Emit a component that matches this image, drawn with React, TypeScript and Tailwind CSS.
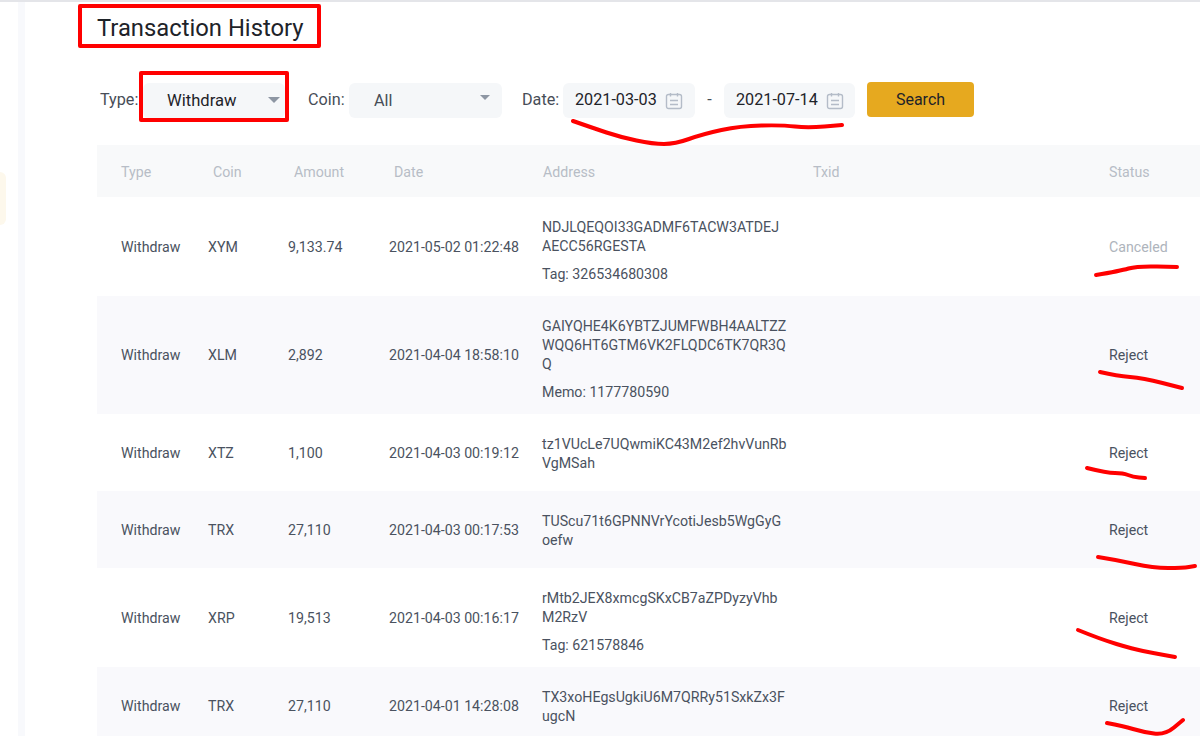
const rows = [
  { coin: 'XYM', amount: '9,133.74', date: '2021-05-02 01:22:48', lines: ['NDJLQEQOI33GADMF6TACW3ATDEJ', 'AECC56RGESTA'], extra: 'Tag: 326534680308', status: 'Canceled', height: 'h-[99px]' },
  { coin: 'XLM', amount: '2,892', date: '2021-04-04 18:58:10', lines: ['GAIYQHE4K6YBTZJUMFWBH4AALTZZ', 'WQQ6HT6GTM6VK2FLQDC6TK7QR3Q', 'Q'], extra: 'Memo: 1177780590', status: 'Reject', height: 'h-[118px]' },
  { coin: 'XTZ', amount: '1,100', date: '2021-04-03 00:19:12', lines: ['tz1VUcLe7UQwmiKC43M2ef2hvVunRb', 'VgMSah'], status: 'Reject', height: 'h-[77px]' },
  { coin: 'TRX', amount: '27,110', date: '2021-04-03 00:17:53', lines: ['TUScu71t6GPNNVrYcotiJesb5WgGyG', 'oefw'], status: 'Reject', height: 'h-[77px]' },
  { coin: 'XRP', amount: '19,513', date: '2021-04-03 00:16:17', lines: ['rMtb2JEX8xmcgSKxCB7aZPDyzyVhb', 'M2RzV'], extra: 'Tag: 621578846', status: 'Reject', height: 'h-[99px]' },
  { coin: 'TRX', amount: '27,110', date: '2021-04-01 14:28:08', lines: ['TX3xoHEgsUgkiU6M7QRRy51SxkZx3F', 'ugcN'], status: 'Reject', height: 'h-[77px]' },
];

// hand-drawn red underlines, as point lists
const scribbles = [
  [[573, 121], [593, 128], [620, 137], [653, 144], [675, 144], [703, 134], [740, 126], [783, 125], [807, 128], [842, 125]],
  [[1096, 275], [1120, 271], [1137, 266], [1177, 267]],
  [[1100, 372], [1117, 376], [1143, 378], [1182, 388]],
  [[1087, 468], [1107, 473], [1123, 473], [1133, 477], [1145, 478]],
  [[1098, 557], [1117, 560], [1153, 568], [1183, 568], [1195, 566]],
  [[1078, 630], [1100, 639], [1133, 649], [1153, 653], [1175, 657]],
  [[1107, 723], [1123, 726], [1143, 732], [1165, 735], [1183, 720]],
];

const smooth = (pts: number[][]) => {
  let d = `M${pts[0][0]} ${pts[0][1]}`;
  for (let i = 1; i < pts.length - 1; i++) {
    const mx = (pts[i][0] + pts[i + 1][0]) / 2;
    const my = (pts[i][1] + pts[i + 1][1]) / 2;
    d += ` Q${pts[i][0]} ${pts[i][1]} ${mx} ${my}`;
  }
  const last = pts[pts.length - 1];
  return `${d} L${last[0]} ${last[1]}`;
};

function CalendarIcon() {
  return (
    <svg width="18" height="18" viewBox="0 0 18 18" fill="none" stroke="#b4bcc8" strokeWidth="1.4" className="ml-[8px]">
      <rect x="1.5" y="2.5" width="15" height="14" rx="2" />
      <path d="M5.5 1 V4.5 M12.5 1 V4.5 M5 8.5 H13 M5 12.5 H13" />
    </svg>
  );
}

function DateInput({ value, width }: { value: string; width: string }) {
  return (
    <div className={`flex h-[35px] items-center self-end rounded-[6px] bg-[#f5f7f9] pl-[12px] text-[#1e2329] ${width}`}>
      <span>{value}</span>
      <CalendarIcon />
    </div>
  );
}

export default function App() {
  return (
    <div className="relative h-[736px] w-[1200px] overflow-hidden bg-white font-['Roboto',sans-serif]">
      <div className="h-[2px] bg-[#e4e5e9]" />
      <div className="flex h-[734px]">
        <div className="flex w-[25px] shrink-0">
          <div className="w-[18px] pt-[170px]">
            <div className="h-[53px] w-[6px] rounded-r-[6px] bg-[#fdf8ec]" />
          </div>
          <div className="w-[7px] bg-[#f8f9fc]" />
        </div>

        <div className="flex-1 pl-[72px]">
          <h1 className="pt-[11px] text-[23.8px] leading-[30px] font-normal text-[#1e2329]">Transaction History</h1>

          <div className="mt-[39px] ml-[3px] flex h-[36px] items-center text-[16.2px] text-[#474d57]">
            <span className="w-[43px] shrink-0 whitespace-nowrap pt-[1px]">Type:</span>
            <div className="relative flex h-[35px] w-[142px] shrink-0 items-center self-end rounded-[6px] bg-[#f5f7f9] pt-[1px] pl-[24px] text-[16.6px] text-[#1e2329]">
              Withdraw
              <svg width="12" height="6" viewBox="0 0 12 6" className="absolute top-[14px] right-[5px]">
                <path d="M0 0 H12 L6 6 Z" fill="#8d96a3" />
              </svg>
            </div>
            <span className="ml-[23px] w-[41px] shrink-0 pt-[1px]">Coin:</span>
            <div className="relative flex h-[35px] w-[153px] shrink-0 items-center self-end rounded-[6px] bg-[#f5f7f9] pt-[1px] pl-[25px]">
              All
              <svg width="10" height="5" viewBox="0 0 10 5" className="absolute top-[12px] right-[12px]">
                <path d="M0 0 H10 L5 5 Z" fill="#8d96a3" />
              </svg>
            </div>
            <span className="ml-[20px] w-[41px] shrink-0 pt-[1px]">Date:</span>
            <DateInput value="2021-03-03" width="w-[132px]" />
            <span className="w-[29px] text-center">-</span>
            <DateInput value="2021-07-14" width="w-[131px]" />
            <button className="ml-[12px] h-[35px] w-[107px] self-start rounded-[4px] bg-[#e6a91f] text-center text-[16px] text-[#1e2329]">Search</button>
          </div>

          <div className="mt-[27px] w-[1103px] text-[14.2px]">
            <div className="grid h-[52px] grid-cols-[92px_81px_100px_149px_270px_296px_1fr] items-center bg-[#f8f9fa] pt-[3px] pl-[24px] text-[#b7bdc6]">
              <span>Type</span>
              <span>Coin</span>
              <span>Amount</span>
              <span>Date</span>
              <span>Address</span>
              <span>Txid</span>
              <span>Status</span>
            </div>
            {rows.map((r, i) => (
              <div
                key={i}
                className={`grid grid-cols-[87px_80px_101px_153px_567px_1fr] items-center pt-[2px] pl-[24px] text-[#4a5260] ${r.height} ${i % 2 === 1 ? 'bg-[#f9f9fc]' : 'bg-white'}`}
              >
                <span>Withdraw</span>
                <span>{r.coin}</span>
                <span>{r.amount}</span>
                <span>{r.date}</span>
                <div className="self-start pt-[19px] leading-[19px]">
                  {r.lines.map(l => (
                    <div key={l}>{l}</div>
                  ))}
                  {r.extra && <div className="mt-[9px]">{r.extra}</div>}
                </div>
                <span className={r.status === 'Canceled' ? 'text-[#aeb4bc]' : ''}>{r.status}</span>
              </div>
            ))}
          </div>
        </div>
      </div>

      {/* red marks drawn over the screenshot */}
      <div className="absolute top-[4px] left-[78px] h-[44px] w-[243px] rounded-[2px] border-4 border-[#ff0000]" />
      <div className="absolute top-[71px] left-[139px] h-[51px] w-[150px] rounded-[2px] border-4 border-[#ff0000]" />
      <svg width="1200" height="736" className="pointer-events-none absolute top-0 left-0" fill="none" stroke="#ff0000" strokeWidth="4" strokeLinecap="round" strokeLinejoin="round">
        {scribbles.map((pts, i) => (
          <path key={i} d={smooth(pts)} />
        ))}
      </svg>
    </div>
  );
}
